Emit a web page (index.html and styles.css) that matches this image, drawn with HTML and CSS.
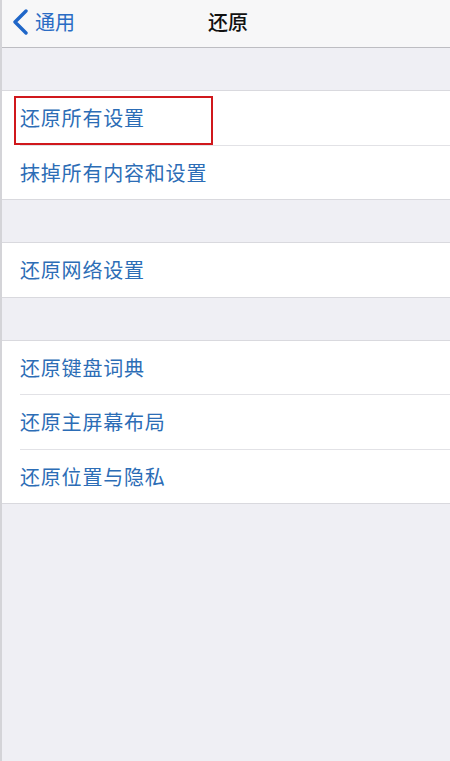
FILE: index.html
```html
<!DOCTYPE html>
<html lang="zh-CN">
<head>
<meta charset="utf-8">
<title>还原</title>
<link rel="stylesheet" href="styles.css">
</head>
<body>
<div class="screen">
  <header class="nav">
    <a class="back">
      <svg class="chev" width="18" height="26" viewBox="0 0 18 26"><path d="M15 2 L4 13 L15 24" fill="none" stroke="#1f66c8" stroke-width="3.4" stroke-linecap="round" stroke-linejoin="round"/></svg>
      <span>通用</span>
    </a>
    <div class="title">还原</div>
  </header>
  <div class="gap"></div>
  <ul class="group">
    <li class="row">还原所有设置<span class="mark"></span></li>
    <li class="row">抹掉所有内容和设置</li>
  </ul>
  <div class="gap"></div>
  <ul class="group">
    <li class="row">还原网络设置</li>
  </ul>
  <div class="gap"></div>
  <ul class="group">
    <li class="row">还原键盘词典</li>
    <li class="row">还原主屏幕布局</li>
    <li class="row">还原位置与隐私</li>
  </ul>
</div>
</body>
</html>
```
FILE: styles.css
```css
html, body {
  margin: 0;
  padding: 0;
  background: #efeff4;
}
body {
  font-family: "Noto Sans CJK SC", "Noto Sans", sans-serif;
  width: 450px;
  height: 761px;
  overflow: hidden;
}
.screen {
  height: 761px;
  border-left: 2px solid #d4d4d8;
  box-sizing: border-box;
  background: #efeff4;
}
.nav {
  background: #f7f7f8;
  border-bottom: 1px solid #bdbdc2;
  display: flex;
  align-items: center;
  position: relative;
  padding-bottom: 4px;
  height: 43px;
}
.back {
  display: flex;
  align-items: center;
  gap: 6px;
  padding-left: 9px;
  color: #2a6cc4;
  font-size: 20px;
}
.chev { display: block; }
.title {
  position: absolute;
  left: 0;
  right: 0;
  top: 0;
  height: 42px;
  display: flex;
  align-items: center;
  justify-content: center;
  font-size: 20px;
  font-weight: 500;
  color: #111;
  pointer-events: none;
  padding-left: 4px;
}
.gap {
  height: 42px;
}
.group {
  list-style: none;
  margin: 0;
  padding: 0;
  background: #fff;
  border-top: 1px solid #d9d9de;
  border-bottom: 1px solid #d9d9de;
}
.row {
  position: relative;
  height: 53.5px;
  display: flex;
  align-items: center;
  padding-left: 18px;
  font-size: 20px;
  letter-spacing: 0.8px;
  color: #2c6db6;
}
.row + .row {
  border-top: 1px solid transparent;
}
.row + .row::before {
  content: "";
  position: absolute;
  left: 18px;
  right: 0;
  top: -1px;
  height: 1px;
  background: #e2e2e6;
}
.mark {
  position: absolute;
  left: 12px;
  top: 5px;
  width: 199px;
  height: 49px;
  border: 2px solid #d0181c;
  box-sizing: border-box;
  z-index: 2;
}
```
